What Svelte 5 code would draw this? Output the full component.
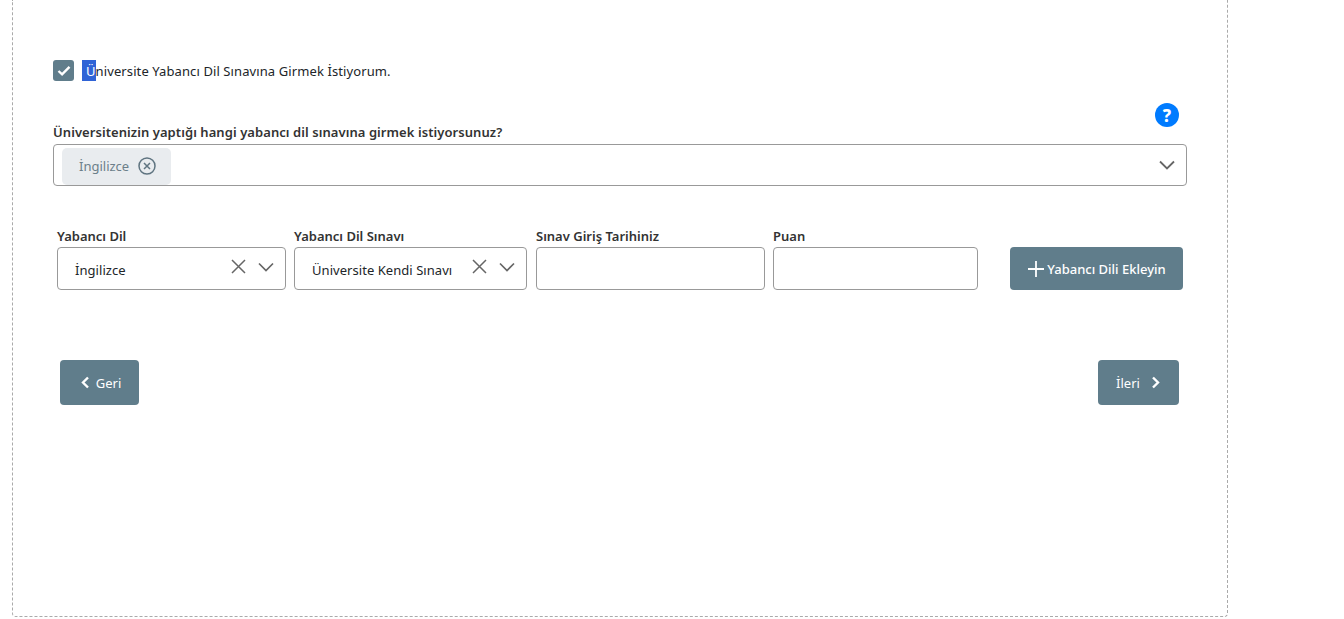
<script>
	let languages = ["İngilizce"];
</script>

<div class="frame">
	<div class="consent">
		<span class="check">
			<svg viewBox="0 0 20 20" width="20" height="20"><path d="M4.5 10l3.6 3.4L15.5 5.8" fill="none" stroke="#fff" stroke-width="2.4" /></svg>
		</span>
		<span class="consent-text"><span class="selected">Ü</span>niversite Yabancı Dil Sınavına Girmek İstiyorum.</span>
	</div>

	<div class="help-row">
		<span class="help">?</span>
	</div>

	<div class="question">Üniversitenizin yaptığı hangi yabancı dil sınavına girmek istiyorsunuz?</div>
	<div class="multi">
		{#each languages as lang}
			<span class="chip">
				<span class="chip-text">{lang}</span>
				<svg viewBox="0 0 18 18" width="18" height="18">
					<circle cx="9" cy="9" r="8" fill="none" stroke="#5f7480" stroke-width="1.5" />
					<path d="M6 6l6 6M12 6l-6 6" stroke="#5f7480" stroke-width="1.5" />
				</svg>
			</span>
		{/each}
		<svg class="chev big" viewBox="0 0 16 10" width="16" height="10"><path d="M1 1.5l7 7 7-7" fill="none" stroke="#666" stroke-width="1.8" /></svg>
	</div>

	<div class="lang-row">
		<div class="field f1">
			<span class="lbl">Yabancı Dil</span>
			<div class="box select">
				<span class="val">İngilizce</span>
				<svg viewBox="0 0 15 15" width="15" height="15"><path d="M1 1l13 13M14 1L1 14" stroke="#666" stroke-width="1.5" /></svg>
				<svg class="chev" viewBox="0 0 16 10" width="16" height="10"><path d="M1 1.5l7 7 7-7" fill="none" stroke="#666" stroke-width="1.7" /></svg>
			</div>
		</div>
		<div class="field f2">
			<span class="lbl">Yabancı Dil Sınavı</span>
			<div class="box select">
				<span class="val">Üniversite Kendi Sınavı</span>
				<svg viewBox="0 0 15 15" width="15" height="15"><path d="M1 1l13 13M14 1L1 14" stroke="#666" stroke-width="1.5" /></svg>
				<svg class="chev" viewBox="0 0 16 10" width="16" height="10"><path d="M1 1.5l7 7 7-7" fill="none" stroke="#666" stroke-width="1.7" /></svg>
			</div>
		</div>
		<div class="field f3">
			<span class="lbl">Sınav Giriş Tarihiniz</span>
			<div class="box"></div>
		</div>
		<div class="field f4">
			<span class="lbl">Puan</span>
			<div class="box"></div>
		</div>
		<button class="btn add">
			<svg viewBox="0 0 18 18" width="18" height="18"><path d="M9 1v16M1 9h16" stroke="#fff" stroke-width="1.8" /></svg>
			<span>Yabancı Dili Ekleyin</span>
		</button>
	</div>

	<div class="nav">
		<button class="btn back">
			<svg viewBox="0 0 10 13" width="10" height="13"><path d="M8 1.5L3 6.5l5 5" fill="none" stroke="#fff" stroke-width="2.4" /></svg>
			<span>Geri</span>
		</button>
		<button class="btn next">
			<span>İleri</span>
			<svg viewBox="0 0 10 13" width="10" height="13"><path d="M2 1.5l5 5-5 5" fill="none" stroke="#fff" stroke-width="2.4" /></svg>
		</button>
	</div>
</div>

<style>
	:global(body) {
		margin: 0;
		background: #fff;
		font-family: "Noto Sans", "Open Sans", sans-serif;
		font-size: 13px;
		color: #212529;
	}

	.frame {
		box-sizing: border-box;
		width: 1216px;
		height: 617px;
		margin-left: 12px;
		padding: 60px 40px 0 40px;
		border: 1px dashed #aaa;
		border-top: none;
		border-radius: 0 0 4px 4px;
	}

	.consent {
		display: flex;
		align-items: center;
		height: 21px;
	}

	.check {
		display: flex;
		align-items: center;
		justify-content: center;
		width: 21px;
		height: 21px;
		border-radius: 3px;
		background: #607d8b;
		margin-right: 8px;
	}

	.consent-text {
		height: 21px;
		line-height: 23px;
		white-space: nowrap;
		letter-spacing: 0.1px;
	}

	.selected {
		display: inline-block;
		padding-left: 4px;
		background: #2f63d6;
		color: #fff;
		height: 21px;
	}

	.help-row {
		display: flex;
		justify-content: flex-end;
		margin-top: 22px;
		height: 24px;
		padding-right: 8px;
	}

	.help {
		width: 24px;
		height: 24px;
		border-radius: 50%;
		background: #007bff;
		color: #fff;
		font-weight: 800;
		font-size: 17px;
		line-height: 26px;
		text-align: center;
	}

	.question {
		font-weight: 600;
		line-height: 18px;
		margin-top: -4px;
		margin-bottom: 3px;
		letter-spacing: 0.07px;
		color: #333;
	}

	.multi {
		box-sizing: border-box;
		display: flex;
		align-items: center;
		height: 42px;
		padding: 3px 11px 0 8px;
		border: 1px solid #999;
		border-radius: 4px;
	}

	.chip {
		box-sizing: border-box;
		display: flex;
		align-items: center;
		gap: 9px;
		width: 109px;
		height: 37px;
		padding-left: 17px;
		border-radius: 5px;
		background: #e9ecef;
		color: #6c7f8a;
	}

	.chip svg {
		margin-top: -2px;
	}

	.chip-text {
		margin-top: -1px;
	}

	.chev.big {
		margin-left: auto;
		margin-top: -3px;
	}

	.lang-row {
		display: flex;
		align-items: flex-end;
		margin-top: 40px;
		margin-left: 4px;
	}

	.field {
		display: flex;
		flex-direction: column;
		margin-right: 8px;
	}

	.f1 { width: 229px; }
	.f2 { width: 233px; margin-right: 9px; }
	.f3 { width: 229px; }
	.f4 { width: 205px; margin-right: 32px; }

	.lbl {
		font-weight: 600;
		line-height: 20px;
		margin-bottom: 1px;
		color: #333;
	}

	.box {
		box-sizing: border-box;
		height: 43px;
		border: 1px solid #999;
		border-radius: 4px;
	}

	.select {
		display: flex;
		align-items: center;
		padding-left: 17px;
		padding-right: 11px;
	}

	.val {
		flex: 1;
		white-space: nowrap;
		padding-top: 2px;
		letter-spacing: 0.05px;
	}

	.select svg {
		margin-top: -4px;
	}

	.select .chev {
		margin-left: 12px;
	}

	.btn {
		display: flex;
		align-items: center;
		justify-content: center;
		border: none;
		border-radius: 4px;
		background: #607d8b;
		color: #fff;
		font: inherit;
		cursor: pointer;
	}

	.add {
		gap: 2px;
		width: 173px;
		height: 43px;
		padding: 0;
		font-weight: 500;
	}

	.nav {
		display: flex;
		justify-content: space-between;
		margin-top: 70px;
		padding: 0 8px 0 7px;
	}

	.back, .next {
		height: 45px;
		padding: 0;
	}

	.back { width: 79px; gap: 6px; padding-left: 2px; }
	.next { width: 81px; gap: 11px; }
</style>
